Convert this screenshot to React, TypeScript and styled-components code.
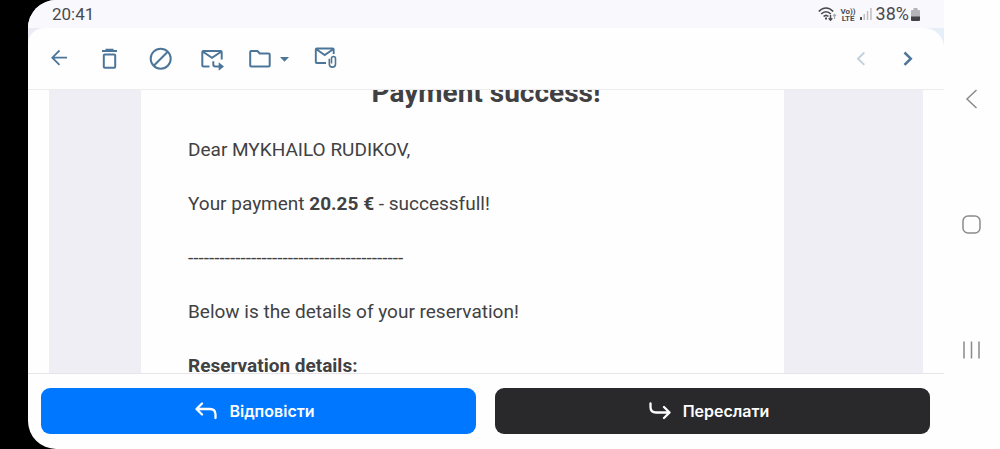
import React from "react";
import styled, { createGlobalStyle } from "styled-components";

const GlobalStyle = createGlobalStyle`
  * { box-sizing: border-box; }
  body { margin: 0; background: #000; font-family: Roboto, "Liberation Sans", sans-serif; }
  p, h1 { margin: 0; }
`;

const Device = styled.div`
  display: flex;
  height: 100vh;
  padding-left: 28px;
  background: #000;
`;

const Screen = styled.div`
  flex: 1;
  min-width: 0;
  display: flex;
  overflow: hidden;
  border-radius: 28px 0 0 28px;
  background: #fefefe;
`;

const MailApp = styled.div`
  flex: 1;
  min-width: 0;
  display: flex;
  flex-direction: column;
`;

const StatusBar = styled.header`
  flex: none;
  height: 28px;
  padding: 0 24px;
  display: flex;
  align-items: center;
  justify-content: space-between;
  background: #f9f8fd;
  color: #4a4a4e;
  font-size: 17px;
  line-height: 28px;
`;

const StatusIcons = styled.div`
  display: flex;
  align-items: center;
  gap: 4px;
`;

const BatteryLevel = styled.span`
  display: flex;
  align-items: center;
  gap: 2px;
  font-size: 18px;
`;

const ToolbarBackdrop = styled.div`
  flex: none;
  background: linear-gradient(90deg, #ebebf5, #e6eff9);
`;

const Toolbar = styled.div`
  display: flex;
  justify-content: space-between;
  padding: 17px 22px 16px 17px;
  border-bottom: 1px solid #ececee;
  border-radius: 16px 20px 0 0;
  background: #fefefe;
`;

const ToolGroup = styled.div<{ $gap: number }>`
  display: flex;
  gap: ${(p) => p.$gap}px;
`;

const IconButton = styled.button<{ $tone?: string }>`
  display: flex;
  padding: 0;
  border: 0;
  background: none;
  color: ${(p) => p.$tone ?? "#4c7699"};
  cursor: pointer;

  svg {
    fill: none;
    stroke: currentColor;
    stroke-width: 2;
  }
`;

const Reader = styled.main`
  flex: 1;
  min-height: 0;
  overflow: hidden;
  margin: 0 21px;
  padding: 0 139px 0 92px;
  background: #efeef4;
`;

const Letter = styled.article`
  min-height: 100%;
  margin-top: -20px;
  padding: 5px 0 0 47px;
  background: #fefefe;
  color: #414143;
  font-size: 19px;
  line-height: 24px;
`;

const Title = styled.h1`
  margin-bottom: 27px;
  font-size: 28px;
  line-height: 36px;
  text-align: center;
`;

const Paragraph = styled.p`
  margin-bottom: 30px;
  white-space: nowrap;
`;

const Actions = styled.footer`
  flex: none;
  display: flex;
  gap: 19px;
  padding: 14px 14px 15px 13px;
  border-top: 1px solid #e6e6ea;
`;

const ActionButton = styled.button<{ $fill: string }>`
  flex: 1;
  height: 46px;
  padding: 0 7px 0 0;
  display: flex;
  align-items: center;
  justify-content: center;
  gap: 12px;
  border: 0;
  border-radius: 9px;
  background: ${(p) => p.$fill};
  color: #fdfdfd;
  font: 600 16px/24px Inter, "Liberation Sans", sans-serif;
  cursor: pointer;

  svg {
    fill: none;
    stroke: currentColor;
    stroke-width: 2.3;
    stroke-linecap: round;
    stroke-linejoin: round;
  }
`;

const SystemNav = styled.nav`
  flex: none;
  width: 56px;
  padding: 89px 0;
  display: flex;
  flex-direction: column;
  align-items: center;
  justify-content: space-between;
`;

const WifiIcon = () => (
  <svg width="19" height="16" viewBox="0 0 19 16" fill="none" stroke="#4a4a4e" strokeWidth="1.700">
    <path d="M.8 5.500C5 .8 11 .8 15.200 5.500M3.200 8c2.800-3 6.800-3 9.600 0M5.600 10.500c1.500-1.500 3.300-1.500 4.800 0" />
    <path d="M7 12.500h2" strokeWidth="2" />
    <path d="M12.500 9v5M10.700 12.200l1.800 2 1.800-2" strokeWidth="1.400" />
    <path d="M16.500 13V8.500M15 10l1.500-1.600L18 10" stroke="#aaaab0" strokeWidth="1.200" />
  </svg>
);

const CallLabel = styled.span`
  width: 15px;
  display: flex;
  flex-direction: column;
  align-items: center;
  padding-top: 1px;
  font-size: 8px;
  font-weight: 700;
  line-height: 7px;
`;

const SignalIcon = () => (
  <svg width="12" height="14" viewBox="0 0 12 14">
    <path d="M0 10h2v3H0z" fill="#4a4a4e" />
    <path d="M3.500 7h1.500v6H3.500zM6.800 4h1.500v9H6.800zM10.200 1h1.500v12h-1.500z" fill="#bdbdc3" />
  </svg>
);

const BatteryIcon = () => (
  <svg width="9" height="13" viewBox="0 0 9 13">
    <path d="M2.500 0h4v2H8q1 0 1 1v6H0V3q0-1 1-1h1.500z" fill="#b4b4b9" />
    <path d="M0 8.500h9V12q0 1-1 1H1q-1 0-1-1z" fill="#434347" />
  </svg>
);

export default function App() {
  return (
    <Device>
      <GlobalStyle />
      <Screen>
        <MailApp>
          <StatusBar>
            <span>20:41</span>
            <StatusIcons>
              <WifiIcon />
              <CallLabel>
                <span>Vo))</span>
                <span>LTE</span>
              </CallLabel>
              <SignalIcon />
              <BatteryLevel>
                38%
                <BatteryIcon />
              </BatteryLevel>
            </StatusIcons>
          </StatusBar>

          <ToolbarBackdrop>
            <Toolbar>
              <ToolGroup $gap={23}>
                <IconButton aria-label="Назад">
                  <svg width="28" height="28" viewBox="0 0 28 28">
                    <path d="M22 12.700H7.500M14.500 5.500l-7.200 7.200 7.200 7.200" strokeWidth="1.800" />
                  </svg>
                </IconButton>
                <IconButton aria-label="Видалити">
                  <svg width="28" height="28" viewBox="0 0 28 28">
                    <path d="M6 6h15M9.500 4.800h8" />
                    <rect x="7.800" y="9.500" width="11.400" height="13.200" rx="1" />
                  </svg>
                </IconButton>
                <IconButton aria-label="Спам">
                  <svg width="28" height="28" viewBox="0 0 28 28">
                    <circle cx="13.700" cy="13.700" r="10" />
                    <path d="M6.700 20.700l14-14" />
                  </svg>
                </IconButton>
                <IconButton aria-label="Переслати лист">
                  <svg width="28" height="28" viewBox="0 0 28 28">
                    <path d="M11.500 21.500H5.300q-1 0-1-1V7q0-1 1-1h17.400q1 0 1 1v7.500M4.600 6.500L14 12.800l9.400-6.300" />
                    <path d="M15.300 16.300v3q0 2.200 2.200 2.200h4" />
                    <path d="M20.700 17.300l5.300 4.200-5.300 4.200z" fill="currentColor" stroke="none" />
                  </svg>
                </IconButton>
                <IconButton aria-label="Перемістити до папки">
                  <svg width="40" height="28" viewBox="0 0 40 28">
                    <path d="M2.200 6h6.300l2.200 2.500h9q1 0 1 1v11q0 1-1 1H2.200q-1 0-1-1V7q0-1 1-1z" />
                    <path d="M31 12h9l-4.500 4.800z" fill="currentColor" stroke="none" />
                  </svg>
                </IconButton>
                <IconButton aria-label="Вкладення">
                  <svg width="28" height="28" viewBox="0 0 28 28">
                    <path d="M14 18H4.800q-1 0-1-1V4.500q0-1 1-1h15.900q1 0 1 1V9M4 4l8.700 6L21.500 4" strokeWidth="1.900" />
                    <path d="M17.300 13.800v5.200a3.100 3.100 0 0 0 6.200 0v-5.500a2 2 0 0 0-4 0v5" strokeWidth="1.600" />
                  </svg>
                </IconButton>
              </ToolGroup>
              <ToolGroup $gap={19}>
                <IconButton aria-label="Попередній" $tone="#c5d2de">
                  <svg width="28" height="28" viewBox="0 0 28 28">
                    <path d="M17.300 7.500L11 13.700l6.300 6.200" />
                  </svg>
                </IconButton>
                <IconButton aria-label="Наступний">
                  <svg width="28" height="28" viewBox="0 0 28 28">
                    <path d="M10.500 7.500l6.300 6.200-6.300 6.200" strokeWidth="2.500" />
                  </svg>
                </IconButton>
              </ToolGroup>
            </Toolbar>
          </ToolbarBackdrop>

          <Reader>
            <Letter>
              <Title>Payment success!</Title>
              <Paragraph>Dear MYKHAILO RUDIKOV,</Paragraph>
              <Paragraph>
                Your payment <strong>20.25 €</strong> - successfull!
              </Paragraph>
              <Paragraph>{"-".repeat(41)}</Paragraph>
              <Paragraph>Below is the details of your reservation!</Paragraph>
              <Paragraph>
                <strong>Reservation details:</strong>
              </Paragraph>
            </Letter>
          </Reader>

          <Actions>
            <ActionButton $fill="#0077ff">
              <svg width="22" height="18" viewBox="0 0 22 18">
                <path d="M7 1.500L1.500 7 7 12.500M2 7h13q5.500 0 5.500 5.500V16" />
              </svg>
              Відповісти
            </ActionButton>
            <ActionButton $fill="#29292b">
              <svg width="22" height="18" viewBox="0 0 22 18">
                <path d="M1.500 1.500V5q0 5.500 5.500 5.500h13.500M15 5l5.500 5.500L15 16" />
              </svg>
              Переслати
            </ActionButton>
          </Actions>
        </MailApp>

        <SystemNav>
          <IconButton aria-label="Back" $tone="#8b8b8b">
            <svg width="20" height="20" viewBox="0 0 20 20">
              <path d="M14.500 1L5 10l9.500 9" strokeWidth="1.500" />
            </svg>
          </IconButton>
          <IconButton aria-label="Home" $tone="#8b8b8b">
            <svg width="20" height="20" viewBox="0 0 20 20">
              <rect x="1" y="1" width="17" height="17" rx="5" strokeWidth="1.500" />
            </svg>
          </IconButton>
          <IconButton aria-label="Recents" $tone="#8b8b8b">
            <svg width="20" height="20" viewBox="0 0 20 20">
              <path d="M2 1.500v17M9.500 1.500v17M17 1.500v17" strokeWidth="1.500" />
            </svg>
          </IconButton>
        </SystemNav>
      </Screen>
    </Device>
  );
}
